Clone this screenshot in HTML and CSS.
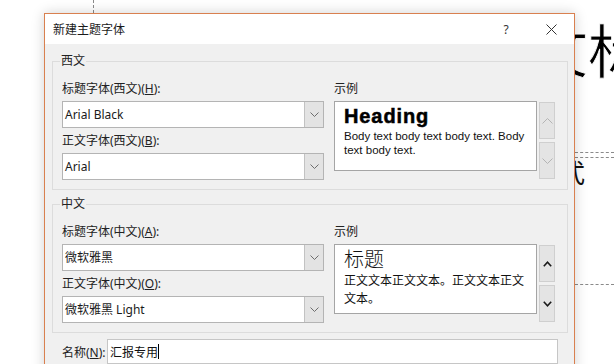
FILE: index.html
```html
<!DOCTYPE html>
<html lang="zh">
<head>
<meta charset="utf-8">
<title>新建主题字体</title>
<link rel="stylesheet" href="styles.css">
</head>
<body>
<div class="slide">
  <div class="guide-v"></div>
  <div class="big-text">文标</div>
  <div class="guide-h guide-h1"></div>
  <div class="guide-h guide-h2"></div>
  <div class="small-text">式</div>
  <div class="guide-h guide-h3"></div>
</div>

<div class="dialog">
  <div class="titlebar">
    <span class="title">新建主题字体</span>
    <span class="help">?</span>
    <span class="close"><svg width="11" height="11" viewBox="0 0 11 11"><path d="M0.5 0.5 L10.5 10.5 M10.5 0.5 L0.5 10.5" stroke="#333" stroke-width="1" fill="none"/></svg></span>
  </div>

  <div class="dialog-body">
    <fieldset class="group">
      <legend>西文</legend>
      <div class="group-cols">
        <div class="col-left">
          <div class="field-label">标题字体(西文)(<u>H</u>):</div>
          <div class="combo">
            <span class="combo-text">Arial Black</span>
            <span class="combo-btn"><svg width="9" height="5" viewBox="0 0 9 5"><path d="M0.5 0.5 L4.5 4.5 L8.5 0.5" stroke="#6d6d6d" fill="none"/></svg></span>
          </div>
          <div class="field-label second">正文字体(西文)(<u>B</u>):</div>
          <div class="combo">
            <span class="combo-text">Arial</span>
            <span class="combo-btn"><svg width="9" height="5" viewBox="0 0 9 5"><path d="M0.5 0.5 L4.5 4.5 L8.5 0.5" stroke="#6d6d6d" fill="none"/></svg></span>
          </div>
        </div>
        <div class="col-right">
          <div class="field-label">示例</div>
          <div class="sample-row">
            <div class="sample">
              <div class="latin-heading">Heading</div>
              <div class="latin-body">Body text body text body text. Body text body text.</div>
            </div>
            <div class="scroll">
              <div class="scroll-btn"><svg width="11" height="6" viewBox="0 0 11 6"><path d="M0.5 5.5 L5.5 0.5 L10.5 5.5" stroke="#b4b4b4" fill="none"/></svg></div>
              <div class="scroll-btn"><svg width="11" height="6" viewBox="0 0 11 6"><path d="M0.5 0.5 L5.5 5.5 L10.5 0.5" stroke="#b4b4b4" fill="none"/></svg></div>
            </div>
          </div>
        </div>
      </div>
    </fieldset>

    <fieldset class="group group-cn">
      <legend>中文</legend>
      <div class="group-cols">
        <div class="col-left">
          <div class="field-label">标题字体(中文)(<u>A</u>):</div>
          <div class="combo">
            <span class="combo-text">微软雅黑</span>
            <span class="combo-btn"><svg width="9" height="5" viewBox="0 0 9 5"><path d="M0.5 0.5 L4.5 4.5 L8.5 0.5" stroke="#6d6d6d" fill="none"/></svg></span>
          </div>
          <div class="field-label second">正文字体(中文)(<u>O</u>):</div>
          <div class="combo">
            <span class="combo-text">微软雅黑 Light</span>
            <span class="combo-btn"><svg width="9" height="5" viewBox="0 0 9 5"><path d="M0.5 0.5 L4.5 4.5 L8.5 0.5" stroke="#6d6d6d" fill="none"/></svg></span>
          </div>
        </div>
        <div class="col-right">
          <div class="field-label">示例</div>
          <div class="sample-row">
            <div class="sample">
              <div class="cn-heading">标题</div>
              <div class="cn-body">正文文本正文文本。正文文本正文文本。</div>
            </div>
            <div class="scroll">
              <div class="scroll-btn"><svg width="9" height="6" viewBox="0 0 9 6"><path d="M0.8 5.2 L4.5 1.2 L8.2 5.2" stroke="#1a1a1a" stroke-width="1.6" fill="none"/></svg></div>
              <div class="scroll-btn"><svg width="9" height="6" viewBox="0 0 9 6"><path d="M0.8 0.8 L4.5 4.8 L8.2 0.8" stroke="#1a1a1a" stroke-width="1.6" fill="none"/></svg></div>
            </div>
          </div>
        </div>
      </div>
    </fieldset>

    <div class="name-row">
      <span class="name-label">名称(<u>N</u>):</span>
      <div class="name-input"><span>汇报专用</span><span class="caret"></span></div>
    </div>
  </div>
</div>
</body>
</html>
```

FILE: styles.css
```css
html, body {
  margin: 0;
  padding: 0;
}
body {
  width: 614px;
  height: 364px;
  overflow: hidden;
  background: #ffffff;
  position: relative;
  font-family: "Noto Sans", "Noto Sans CJK SC", sans-serif;
  font-size: 12px;
  color: #222;
}

/* slide canvas behind the dialog */
.slide {
  position: absolute;
  inset: 0;
}
.guide-v {
  position: absolute;
  left: 93px;
  top: 0;
  height: 13px;
  border-left: 1px dashed #8a8a8a;
}
.guide-h {
  position: absolute;
  left: 575px;
  right: 0;
  border-top: 1px dashed #8a8a8a;
}
.guide-h1 { top: 152px; }
.guide-h2 { top: 157px; }
.guide-h3 { top: 284px; }
.big-text {
  position: absolute;
  left: 530px;
  top: 13px;
  font-family: "Noto Sans CJK SC", sans-serif;
  font-weight: 400;
  font-size: 58px;
  line-height: 70px;
  color: #000;
  white-space: nowrap;
  -webkit-text-stroke: 0.8px #fff;
}
.small-text {
  position: absolute;
  left: 559px;
  top: 156px;
  font-family: "Noto Sans CJK SC", sans-serif;
  font-size: 26px;
  line-height: 32px;
  color: #111;
}

/* dialog window */
.dialog {
  position: absolute;
  left: 44px;
  top: 13px;
  width: 531px;
  height: 400px;
  box-sizing: border-box;
  border: 1px solid #d9804f;
  background: #f0f0f0;
  box-shadow: 0 0 12px rgba(0, 0, 0, 0.18);
}
.titlebar {
  height: 30px;
  background: #ffffff;
  display: flex;
  align-items: center;
  padding: 0 8px;
}
.title {
  font-size: 12px;
  color: #1a1a1a;
  flex: 1;
}
.help {
  width: 20px;
  text-align: center;
  font-size: 12px;
  color: #333;
}
.close {
  width: 30px;
  margin-left: 20px;
  display: flex;
  justify-content: center;
  align-items: center;
}

.dialog-body {
  padding: 9px 6px 0 7px;
}

.group {
  margin: 0;
  min-width: 0;
  border: 1px solid #dcdcdc;
  padding: 12px 12px 9px 9px;
}
.group-cn {
  margin-top: 6px;
}
.group legend {
  padding: 0 1px;
  margin-left: -2px;
  line-height: 16px;
  font-size: 12px;
  color: #222;
}
.group-cols {
  display: flex;
  gap: 10px;
}
.col-left {
  width: 262px;
}
.col-right {
  width: 221px;
}
.field-label {
  line-height: 16px;
  margin-bottom: 4px;
  color: #222;
}
.field-label.second {
  margin-top: 5px;
}
u {
  text-decoration-thickness: 1px;
  text-underline-offset: 1px;
}

.combo {
  height: 27px;
  box-sizing: border-box;
  border: 1px solid #b4b4b4;
  background: #fff;
  display: flex;
}
.combo-text {
  flex: 1;
  padding-left: 2px;
  line-height: 25px;
  color: #1a1a1a;
}
.combo-btn {
  width: 18px;
  background: #e3e3e3;
  border-left: 1px solid #c2c2c2;
  display: flex;
  justify-content: center;
  align-items: center;
}

.sample-row {
  display: flex;
  gap: 2px;
}
.sample {
  width: 203px;
  height: 70px;
  box-sizing: border-box;
  border: 1px solid #a5a5a5;
  background: #fff;
  padding: 1px 6px 0 9px;
  overflow: hidden;
}
.latin-heading {
  font-family: "Liberation Sans", Arial, sans-serif;
  font-weight: 900;
  font-size: 20px;
  line-height: 26px;
  letter-spacing: 0.9px;
  color: #000;
  -webkit-text-stroke: 0.5px #000;
}
.latin-body {
  font-family: "Liberation Sans", Arial, sans-serif;
  font-size: 11.5px;
  line-height: 14.3px;
  color: #111;
}
.cn-heading {
  font-family: "Noto Sans CJK SC", sans-serif;
  font-weight: 300;
  font-size: 20px;
  line-height: 25px;
  color: #111;
}
.cn-body {
  font-family: "Noto Sans CJK SC", sans-serif;
  font-weight: 400;
  font-size: 12px;
  line-height: 18px;
  color: #111;
}
.scroll {
  width: 16px;
  margin-top: 1px;
  display: flex;
  flex-direction: column;
  gap: 3px;
}
.scroll-btn {
  height: 37px;
  box-sizing: border-box;
  background: #e4e4e4;
  border: 1px solid #cfcfcf;
  display: flex;
  justify-content: center;
  align-items: center;
}

.name-row {
  margin-top: 6px;
  display: flex;
  align-items: center;
}
.name-label {
  width: 55px;
  padding-left: 10px;
  box-sizing: border-box;
  color: #222;
}
.name-input {
  width: 451px;
  height: 25px;
  box-sizing: border-box;
  border: 1px solid #c6c6c6;
  background: #fff;
  padding-left: 2px;
  display: flex;
  align-items: center;
  font-family: "Noto Sans CJK SC", sans-serif;
  color: #111;
}
.caret {
  width: 1px;
  height: 15px;
  background: #000;
}
```
